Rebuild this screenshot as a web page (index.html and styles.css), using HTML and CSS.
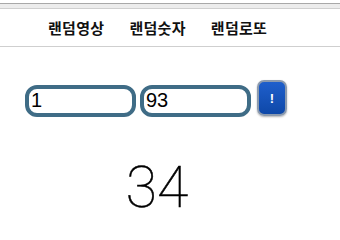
FILE: index.html
```html
<!DOCTYPE html>
<html lang="ko">
<head>
<meta charset="utf-8">
<link rel="stylesheet" href="styles.css">
</head>
<body>
<div class="topbar"></div>
<nav class="nav">
  <a class="nav-link" href="#">랜덤영상</a>
  <a class="nav-link" href="#">랜덤숫자</a>
  <a class="nav-link" href="#">랜덤로또</a>
</nav>
<main class="main">
  <div class="form-row">
    <input class="num-input" type="text" value="1">
    <input class="num-input" type="text" value="93">
    <button class="go-btn" type="button">!</button>
  </div>
  <div class="result">34</div>
</main>
</body>
</html>
```
FILE: styles.css
```css
html, body {
  margin: 0;
  padding: 0;
  background: #fff;
}
body {
  font-family: "Liberation Sans", Arial, sans-serif;
  width: 340px;
  height: 229px;
  overflow: hidden;
}
.topbar {
  margin-top: 3px;
  height: 4px;
  background: #ececec;
  border-top: 1px solid #a8a8a8;
  border-bottom: 1px solid #cfcfcf;
}
.nav {
  display: flex;
  align-items: center;
  gap: 25px;
  height: 37px;
  padding-left: 48px;
  border-bottom: 1px solid #cfcfcf;
}
.nav-link {
  font-family: "Noto Sans CJK KR", sans-serif;
  font-weight: 700;
  font-size: 15px;
  color: #111;
  text-decoration: none;
  letter-spacing: 0.3px;
}
.main {
  padding-top: 33px;
}
.form-row {
  display: flex;
  align-items: center;
  padding-left: 25px;
  gap: 4px;
}
.num-input {
  box-sizing: border-box;
  width: 111px;
  height: 32px;
  border: 4px solid #3f6c86;
  border-radius: 12px;
  padding: 0 2px;
  margin: 0;
  font-family: "Liberation Sans", Arial, sans-serif;
  font-size: 20px;
  color: #000;
  background: #fff;
  outline: none;
}
.go-btn {
  box-sizing: border-box;
  margin-left: 2px;
  margin-bottom: 5px;
  width: 30px;
  height: 36px;
  border: 2px solid #8b9aae;
  border-radius: 7px;
  background: linear-gradient(#1f5fcc, #0e48a8);
  color: #fff;
  font-family: "Liberation Sans", Arial, sans-serif;
  font-weight: 700;
  font-size: 13px;
  padding: 0;
  box-shadow: 0 1px 2px rgba(0,0,0,0.3);
}
.result {
  margin-top: 38px;
  padding-right: 26px;
  text-align: center;
  font-family: Roboto, "Liberation Sans", sans-serif;
  font-weight: 100;
  font-size: 57px;
  line-height: 1;
  color: #000;
  -webkit-text-stroke: 0.5px #000;
}
```
